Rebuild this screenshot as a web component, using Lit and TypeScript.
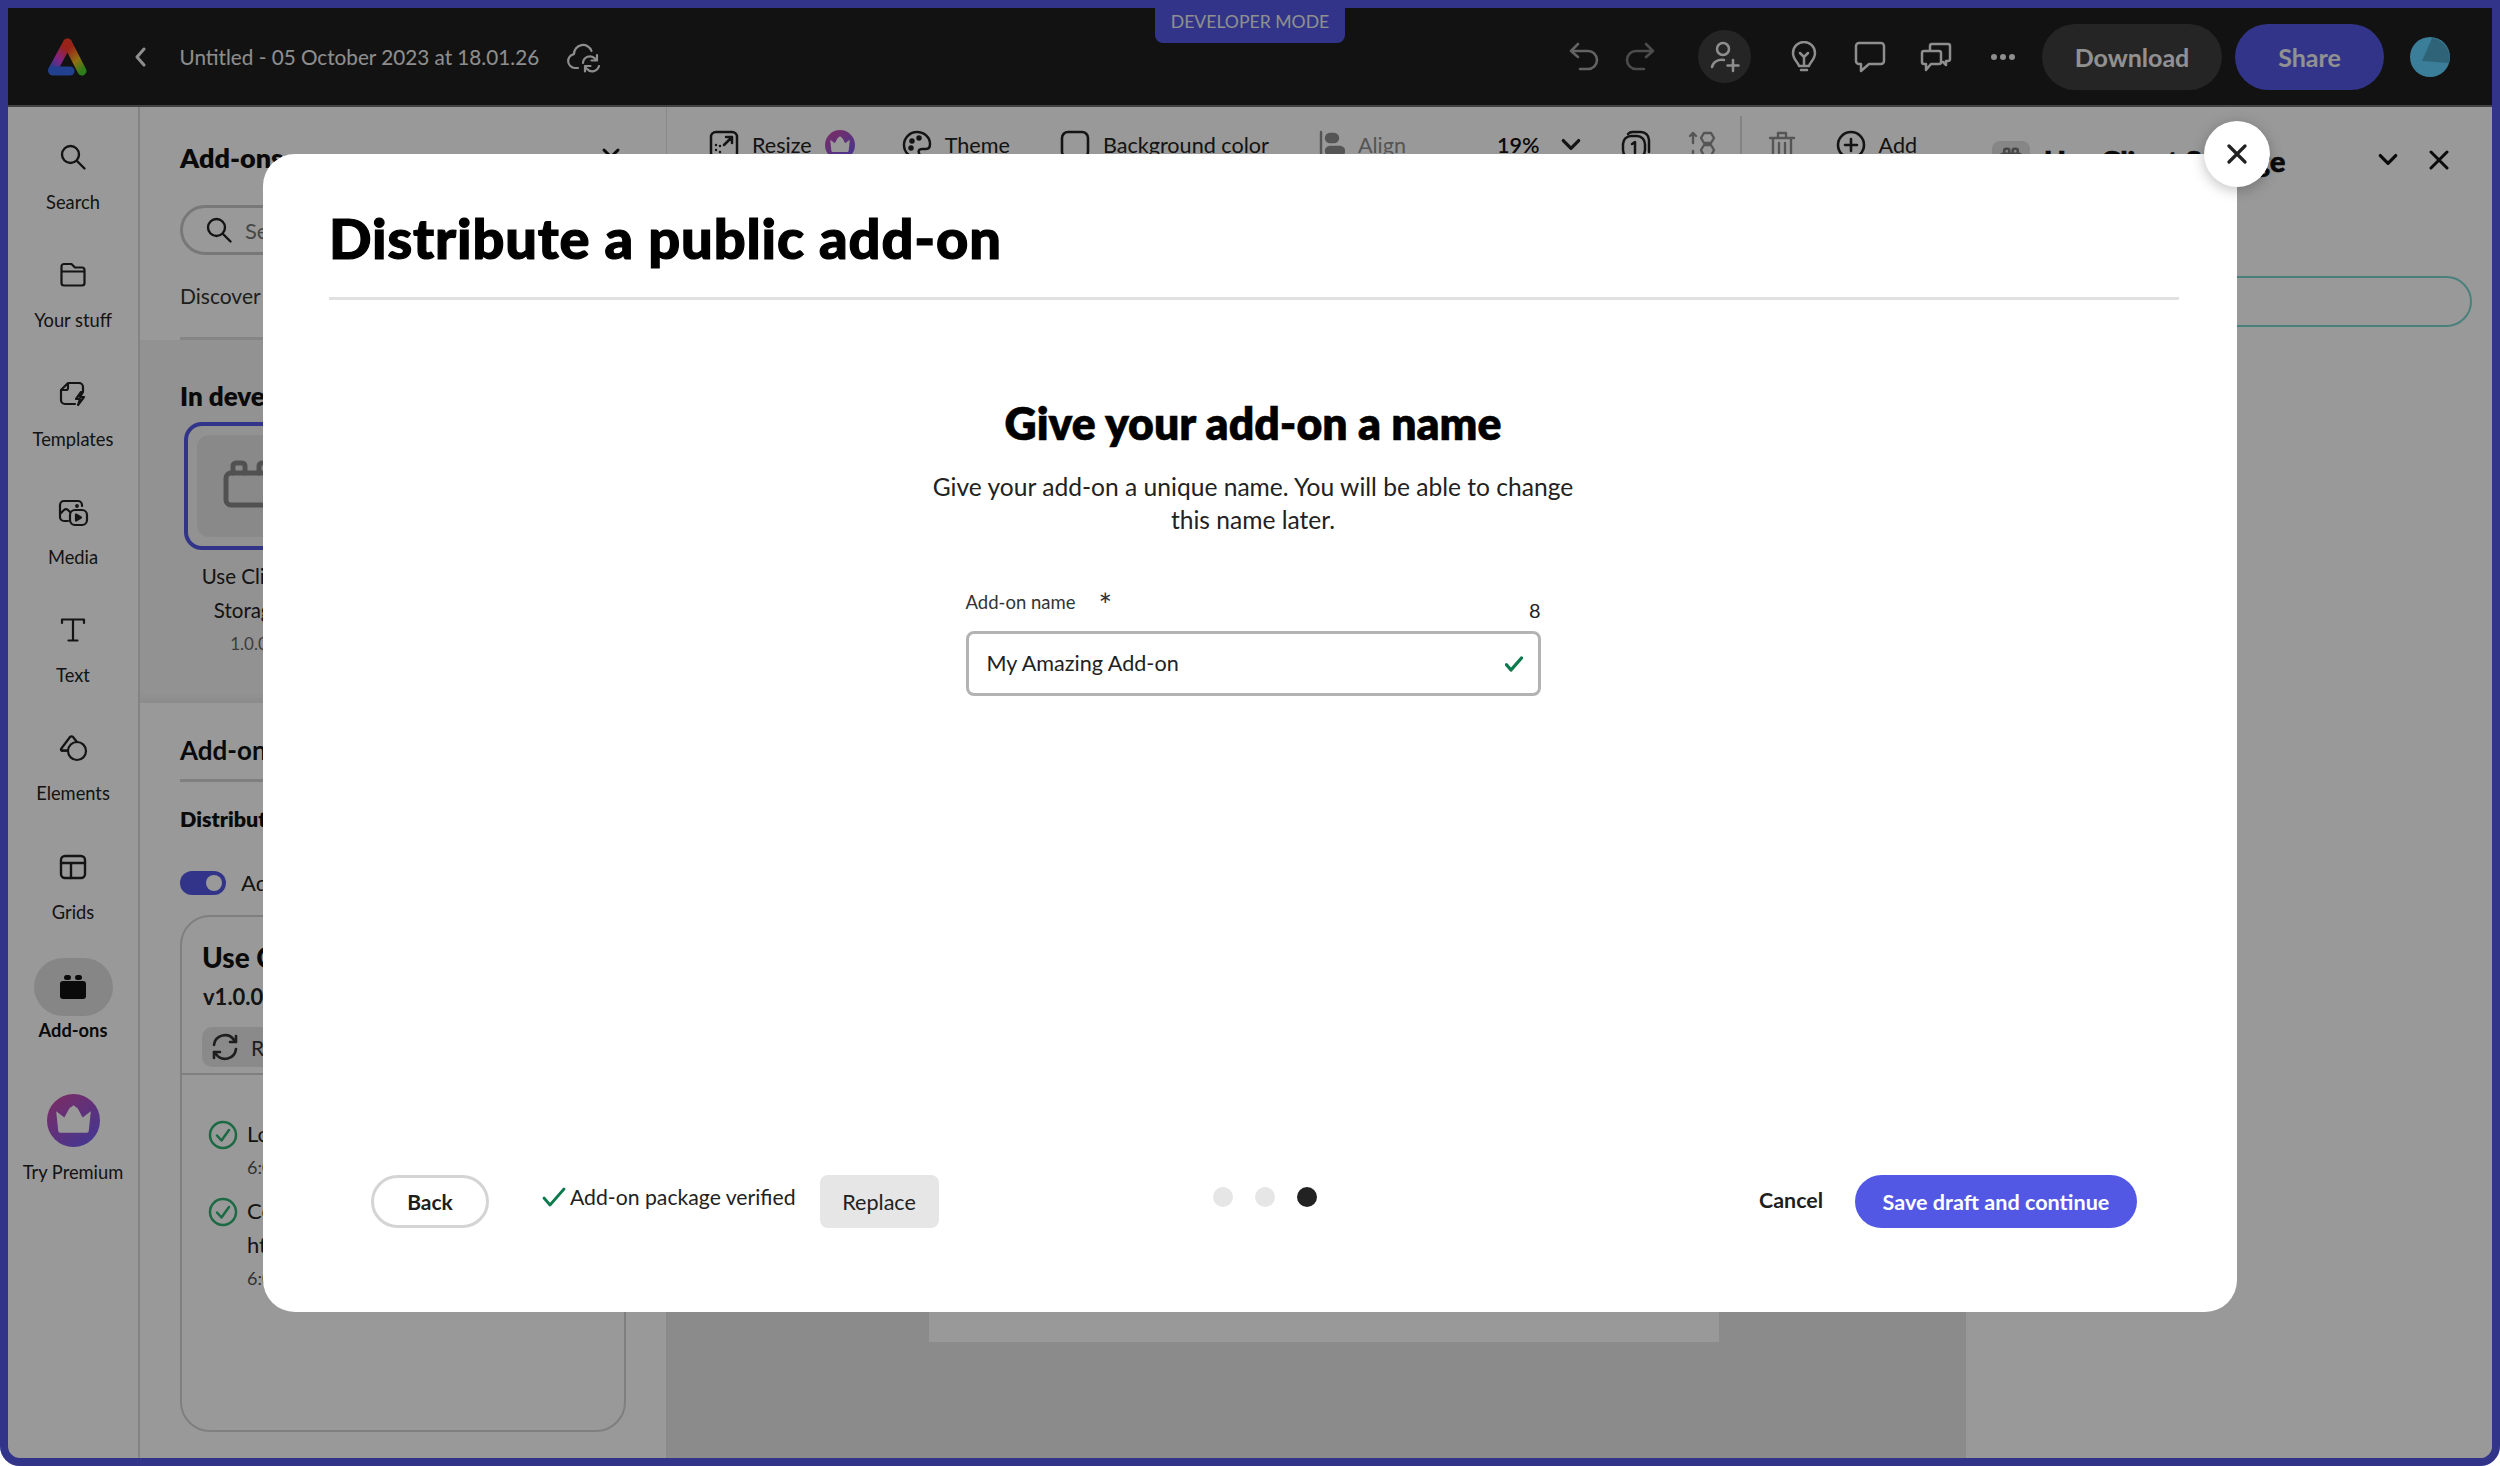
import { LitElement, html, svg, css } from "lit";
import { customElement } from "lit/decorators.js";

const ic = (w: number, h: number, vb: string, body: unknown, sw = 2.2) => html`<svg width=${w} height=${h} viewBox=${vb} fill="none" stroke="currentColor" stroke-width=${sw} stroke-linecap="round" stroke-linejoin="round">${body}</svg>`;

const searchI = (s: number) => ic(s, s, "0 0 28 28", svg`<circle cx="11.5" cy="11.5" r="8.5"></circle><path d="M18 18l7.5 7.5"></path>`, 2.4);
const folderI = ic(28, 28, "0 0 28 28", svg`<path d="M5 24.500h18a2.500 2.500 0 0 0 2.500-2.500V9a2.500 2.500 0 0 0-2.500-2.500h-7L12.500 3H5A2.500 2.500 0 0 0 2.500 5.500V22A2.500 2.500 0 0 0 5 24.500zM2.500 10.500h23"></path>`);
const templatesI = ic(30, 30, "0 0 30 30", svg`<path d="M17 25H7a4 4 0 0 1-4-4V11l7-7h11a4 4 0 0 1 4 4v4M3 11h5a2 2 0 0 0 2-2V4"></path><path d="M23 13l-5 7h4l-2 6 6-8h-4l3-5z"></path>`);
const mediaI = ic(32, 30, "0 0 32 30", svg`<path d="M11 24H7a4 4 0 0 1-4-4V8a4 4 0 0 1 4-4h14a4 4 0 0 1 4 4v1M3 17l4-4a3 3 0 0 1 4 0l2 2"></path><rect x="13" y="13" width="17" height="15" rx="5"></rect><path d="M19 17.500l5 3-5 3z" fill="currentColor"></path><circle cx="20" cy="9" r=".8" fill="currentColor"></circle>`);
const textI = ic(28, 28, "0 0 28 28", svg`<path d="M3 7V3.500h22V7M14 3.500v21M9.500 24.500h9"></path>`, 2.2);
const elementsI = ic(30, 28, "0 0 30 28", svg`<path d="M12 3L3 15a1.200 1.200 0 0 0 1 1.700h6M12 3a2 2 0 0 1 3 0l4 5"></path><path d="M10 17a9 9 0 1 0 9-9"></path><path d="M4 16.700h6a9 9 0 0 1 9-8.700"></path>`);
const gridsI = ic(28, 26, "0 0 28 26", svg`<rect x="2" y="2" width="24" height="22" rx="4"></rect><path d="M2 9h24M12 9v15"></path>`, 2.4);
const addonsI = html`<svg width="28" height="26" viewBox="0 0 28 26" fill="currentColor"><rect x="1" y="7" width="26" height="18" rx="3"></rect><rect x="5" y="1" width="7" height="5" rx="2.500"></rect><rect x="16" y="1" width="7" height="5" rx="2.500"></rect></svg>`;
const crown = (s: number, id: string) => html`<svg width=${s} height=${s} viewBox="0 0 52 52"><defs><linearGradient id=${id} x1="0.15" y1="0" x2="0.85" y2="1"><stop offset="0" stop-color="#cc4aa8"></stop><stop offset="1" stop-color="#6f5cf5"></stop></linearGradient></defs><circle cx="26" cy="26" r="26" fill="url(#${id})"></circle><path d="M9 17l8 6 5-9 4-3 4 3 5 9 8-6-2 19a2 2 0 0 1-2 2H13a2 2 0 0 1-2-2z" fill="#fff"></path></svg>`;
const check = (w: number, h: number, c: string, sw: number) => html`<svg width=${w} height=${h} viewBox="0 0 24 20" fill="none" stroke=${c} stroke-width=${sw} stroke-linecap="round" stroke-linejoin="round"><path d="M2 11l6 7L22 2"></path></svg>`;
const chevD = (w: number) => html`<svg width=${w} height=${w} viewBox="0 0 20 20" fill="none" stroke="currentColor" stroke-width="3" stroke-linecap="round" stroke-linejoin="round"><path d="M3 6l7 7 7-7"></path></svg>`;
const xI = (s: number, sw: number) => html`<svg width=${s} height=${s} viewBox="0 0 20 20" fill="none" stroke="currentColor" stroke-width=${sw} stroke-linecap="round"><path d="M2 2l16 16M18 2L2 18"></path></svg>`;
const okCircle = html`<svg width="30" height="30" viewBox="0 0 30 30" fill="none" stroke="#2fb172" stroke-width="2.500" stroke-linecap="round" stroke-linejoin="round"><circle cx="15" cy="15" r="13"></circle><path d="M9 15.500l4.500 5L21 10"></path></svg>`;

const rail = [
  { label: "Search", icon: searchI(28) },
  { label: "Your stuff", icon: folderI },
  { label: "Templates", icon: templatesI },
  { label: "Media", icon: mediaI },
  { label: "Text", icon: textI },
  { label: "Elements", icon: elementsI },
  { label: "Grids", icon: gridsI },
];

@customElement("app-root")
export class AppRoot extends LitElement {
  static styles = css`
    :host { display: block; position: relative; width: 2500px; height: 1466px; background: #fff; overflow: hidden; font-family: "Lato", "Noto Sans", sans-serif; color: #2c2c2c; }
    * { box-sizing: border-box; }
    .frame { height: 1466px; border: 8px solid #5258e4; border-radius: 0 0 20px 20px; display: flex; flex-direction: column; overflow: hidden; background: #fff; }
    .scrim { position: absolute; inset: 0; background: rgba(0, 0, 0, .4); border-radius: 0 0 20px 20px; }

    .top { height: 99px; flex: none; background: #1e1e1e; border-bottom: 2px solid #6e6e6e; display: flex; align-items: center; color: #ededed; position: relative; }
    .logo { margin-left: 40px; width: 39px; height: 38px; flex: none; }
    .back { margin-left: 47px; display: flex; color: #ededed; }
    .doc { margin-left: 33.500px; font-size: 20.700px; white-space: nowrap; margin-top: 1px; }
    .cloud { margin-left: 27px; display: flex; }
    .devtag { position: absolute; left: 1147px; top: -8px; width: 190px; height: 43px; padding-top: 0; background: #5258e4; border-radius: 0 0 8px 8px; font-size: 17.600px; color: #eee; display: flex; align-items: center; justify-content: center; }
    .actions { margin-left: auto; display: flex; align-items: center; padding-right: 42px; }
    .ib { display: flex; color: #ededed; }
    .undo { color: #a5a5a5; margin-right: 24px; }
    .redo { color: #7f7f7f; margin-right: 42px; }
    .invite { width: 53px; height: 53px; border-radius: 50%; background: #3e3e3e; align-items: center; justify-content: center; margin-right: 40px; }
    .bulb { margin-right: 37px; }
    .cmt { margin-right: 34px; }
    .cmts { margin-right: 39px; }
    .dots3 { margin-right: 27px; }
    .pill { height: 66px; border-radius: 33px; font-size: 25px; font-weight: 700; display: flex; align-items: center; justify-content: center; color: #f2f2f2; }
    .dl { width: 180px; background: #3e3e3e; margin-right: 13px; }
    .sh { width: 149px; background: #5258e4; margin-right: 26px; }

    .body { flex: 1; display: flex; min-height: 0; }
    .rail { width: 132px; flex: none; border-right: 2px solid #dcdcdc; padding-top: 20px; display: flex; flex-direction: column; align-items: center; color: #222; }
    .ri { height: 118.300px; width: 100%; display: flex; flex-direction: column; align-items: center; }
    .rbox { height: 60px; display: flex; align-items: center; justify-content: center; color: #222; }
    .rl { height: 30px; line-height: 30px; font-size: 18.300px; white-space: nowrap; }
    .sel { width: 79px; height: 58px; margin-top: 3px; border-radius: 29px; background: #e0e0e0; display: flex; align-items: center; justify-content: center; color: #111; }
    .ri.on .rl { font-weight: 700; color: #111; }
    .prem { margin-top: 8px; height: 140px; }
    .prem .rbox { height: 78px; }
    .prem .rl { margin-top: -2px; }

    .panel { width: 527px; flex: none; display: flex; flex-direction: column; color: #111; border-right: 1px solid #e4e4e4; }
    .ptop { padding: 32px 40px 0; height: 233px; position: relative; }
    .ptitle { font-size: 27px; font-weight: 800; line-height: 38px; display: flex; justify-content: space-between; align-items: center; padding-right: 5px; }
    .ptitle svg { margin-top: -8px; }
    .psearch { margin-top: 28px; height: 50px; width: 300px; border: 3px solid #c9c9c9; border-radius: 25px; display: flex; align-items: center; gap: 12px; padding-left: 22px; color: #222; font-size: 22px; }
    .psearch span { color: #777; }
    .ptabs { margin-top: 26px; font-size: 21px; color: #333; line-height: 30px; padding-bottom: 12px; }
    .ptop .line { position: absolute; left: 40px; right: 40px; bottom: 0; height: 3px; background: #dedede; }
    .indev { height: 363px; background: #f4f4f4; padding: 40px 40px 0; box-shadow: inset 0 -12px 12px -10px #e2e2e2; }
    .h3 { font-size: 26px; font-weight: 800; line-height: 32px; color: #111; }
    .tile { margin: 10px 0 0 4px; width: 130px; height: 128px; padding: 9px; border: 4px solid #5258e4; border-radius: 18px; }
    .tile div { width: 100%; height: 100%; border-radius: 12px; background: #e5e5e5; padding: 24px 0 0 26px; color: #888; overflow: hidden; }
    .tname { margin: 9px 0 0 3px; font-size: 20.500px; line-height: 34px; text-align: center; width: 130px; color: #222; }
    .tver { margin: 2px 0 0 4px; font-size: 17px; line-height: 30px; color: #666; text-align: center; width: 130px; }
    .psec { padding: 30px 40px 0; flex: 1; min-height: 0; display: flex; flex-direction: column; }
    .psec .head { font-size: 26px; font-weight: 700; line-height: 34px; padding-bottom: 12px; border-bottom: 3px solid #d4d4d4; }
    .psec .dist { margin-top: 22px; font-size: 21.500px; font-weight: 800; line-height: 30px; }
    .tgl { margin-top: 35px; display: flex; align-items: center; gap: 15px; font-size: 22px; color: #222; }
    .track { width: 46px; height: 24px; border-radius: 12px; background: #5258e4; position: relative; }
    .track i { position: absolute; right: 4px; top: 4px; width: 16px; height: 16px; border-radius: 50%; background: #fff; }
    .card { margin-top: 19px; height: 517px; border: 2px solid #d4d4d4; border-radius: 30px; display: flex; flex-direction: column; }
    .cardtop { padding: 22px 20px 0; height: 158px; border-bottom: 2px solid #d4d4d4; }
    .cname { font-size: 28px; font-weight: 900; line-height: 36px; color: #111; }
    .cver { margin: 7px 0 0 1px; font-size: 22px; font-weight: 700; line-height: 30px; color: #222; }
    .rebtn { margin-top: 15px; height: 40px; width: 200px; background: #e6e6e6; border-radius: 10px; display: flex; align-items: center; gap: 12px; padding-left: 9px; font-size: 21px; color: #333; }
    .log { display: flex; gap: 9px; padding: 42px 0 0 26px; }
    .log + .log { padding-top: 11px; }
    .log svg { flex: none; margin-top: 3px; }
    .log p { margin: 0; font-size: 22px; line-height: 34px; color: #222; }
    .log small { display: block; font-size: 18px; color: #555; line-height: 32px; }

    .canvas { width: 1299px; flex: none; background: #e8e8e8; display: flex; flex-direction: column; align-items: center; }
    .tools { align-self: stretch; height: 76px; flex: none; background: #fff; padding-left: 42px; display: flex; align-items: center; font-size: 21.600px; color: #222; white-space: nowrap; }
    .tools span.g { display: flex; align-items: center; gap: 13px; }
    .mute { color: #8e8e8e; }
    .t1 { margin-left: 47px; }
    .t2 { margin-left: 50px; }
    .t3 { margin-left: 50px; }
    .t4 { margin-left: 91px; font-weight: 600; color: #111; }
    .t5 { margin-left: 20px; display: flex; }
    .t6 { margin-left: 39px; display: flex; }
    .t7 { margin-left: 37px; display: flex; color: #8e8e8e; }
    .vd { margin-left: 24px; width: 2px; height: 50px; background: #ddd; margin-top: -8px; }
    .t8 { margin-left: 26px; display: flex; color: #8e8e8e; }
    .t9 { margin-left: 40px; }
    .page { margin-top: auto; margin-bottom: 116px; margin-left: 14px; width: 790px; height: 400px; background: #fff; }

    .right { flex: 1; background: #fff; padding: 34px 20px 0 26px; color: #111; }
    .rhead { display: flex; align-items: center; height: 38px; }
    .rthumb { width: 38px; height: 38px; border-radius: 8px; background: #e0e0e0; margin-right: 14px; padding: 6px 0 0 7px; color: #777; flex: none; }
    .rname { font-size: 29.300px; font-weight: 900; flex: 1; white-space: nowrap; -webkit-text-stroke: .6px #111; }
    .rchev { display: flex; margin-right: 30px; }
    .rx { display: flex; margin-right: 23px; }
    .rinput { margin-top: 97px; height: 51px; border: 2px solid #7cd6cf; border-radius: 26px; }

    .modal { position: absolute; left: 263px; top: 154px; width: 1974px; height: 1158px; background: #fff; border-radius: 32px 0 32px 32px; display: flex; flex-direction: column; color: #000; }
    .close { position: absolute; right: -33px; top: -33px; width: 66px; height: 66px; border-radius: 50%; background: #fff; display: flex; align-items: center; justify-content: center; color: #222; box-shadow: 0 3px 14px rgba(0,0,0,.25); }
    .mhead { margin: 0 58px 0 66px; padding: 54px 0 29px; border-bottom: 3px solid #e1e1e1; }
    h1 { margin: 0; font-size: 56px; line-height: 60px; font-weight: 900; color: #000; letter-spacing: .85px; -webkit-text-stroke: 1.200px #000; }
    .mid { padding-left: 6px; }
    h2 { margin: 99px 0 0; text-align: center; font-size: 44.500px; line-height: 48px; font-weight: 800; color: #000; -webkit-text-stroke: .5px #000; }
    .desc { margin: 24px auto 0; width: 660px; text-align: center; font-size: 24.600px; line-height: 32.500px; color: #222; }
    .form { margin: 52px auto 0; width: 575px; }
    .lrow { display: flex; justify-content: space-between; align-items: flex-start; height: 43px; }
    .lab { font-size: 18.500px; line-height: 28px; color: #333; display: flex; }
    .lab b { font-weight: 400; margin-left: 23px; font-size: 32px; line-height: 34px; color: #333; }
    .cnt { font-size: 20px; line-height: 28px; margin-top: 8px; color: #222; }
    .input { height: 65px; border: 3px solid #b3b3b3; border-radius: 8px; display: flex; align-items: center; justify-content: space-between; padding: 0 15px 0 18px; font-size: 21.600px; color: #222; }
    .input span { margin-top: -2px; }
    .input svg { flex: none; }
    .foot { margin-top: auto; padding: 0 100px 84px 108px; display: flex; align-items: center; }
    .fl, .fr { flex: 1; display: flex; align-items: center; }
    .fr { justify-content: flex-end; }
    .back-btn { width: 118px; height: 53px; border: 3px solid #d4d4d4; border-radius: 27px; font-size: 21px; font-weight: 700; color: #1e1e1e; display: flex; align-items: center; justify-content: center; }
    .ver { margin-left: 53px; display: flex; align-items: center; gap: 4px; font-size: 21.200px; color: #222; margin-bottom: 10px; white-space: nowrap; }
    .rep { margin-left: 24px; width: 119px; height: 53px; border-radius: 8px; background: #e6e6e6; font-size: 21.600px; color: #222; display: flex; align-items: center; justify-content: center; }
    .dots { display: flex; gap: 22px; margin: 0 0 10px 22px; }
    .dots i { width: 20px; height: 20px; border-radius: 50%; background: #e6e6e6; }
    .dots i.cur { background: #222; }
    .cancel { font-size: 21.400px; font-weight: 700; color: #1e1e1e; margin-right: 32px; margin-bottom: 4px; }
    .save { width: 282px; height: 53px; border-radius: 27px; background: #5258e4; color: #fff; font-size: 21.600px; font-weight: 700; display: flex; align-items: center; justify-content: center; white-space: nowrap; }
  `;

  render() {
    return html`
      <div class="frame">
        <header class="top">
          <svg class="logo" viewBox="0 0 39 38">
            <defs>
              <linearGradient id="la" x1="0.5" y1="0" x2="0" y2="1"><stop offset="0" stop-color="#ff3a2a"></stop><stop offset=".5" stop-color="#d83cd8"></stop><stop offset="1" stop-color="#3a6cf0"></stop></linearGradient>
              <linearGradient id="lb" x1="0.5" y1="0" x2="1" y2="1"><stop offset="0" stop-color="#ff3a2a"></stop><stop offset=".55" stop-color="#f2b820"></stop><stop offset="1" stop-color="#4cd02c"></stop></linearGradient>
            </defs>
            <path d="M19.500 5L4.500 32.500" stroke="url(#la)" stroke-width="9" stroke-linecap="round" fill="none"></path>
            <path d="M19.500 5L34 33" stroke="url(#lb)" stroke-width="9" stroke-linecap="round" fill="none"></path>
            <path d="M5 33h17" stroke="#3a6cf0" stroke-width="9" stroke-linecap="round" fill="none"></path>
            <path d="M19.500 18l-4 7.500h7.500z" fill="#1e1e1e"></path>
          </svg>
          <span class="back"><svg width="12" height="20" viewBox="0 0 12 20" fill="none" stroke="currentColor" stroke-width="3" stroke-linecap="round" stroke-linejoin="round"><path d="M10 2L3 10l7 8"></path></svg></span>
          <span class="doc">Untitled - 05 October 2023 at 18.01.26</span>
          <span class="cloud">${ic(38, 32, "0 0 38 32", svg`<path d="M12 27H9a7 7 0 0 1-1-13.900 9 9 0 0 1 17.500-3.100"></path><path d="M17 22a7 7 0 0 1 12-4.500l2 2M31 14v5.500h-5.500M33 25a7 7 0 0 1-12 3l-2-2M19 30.500V25h5.500"></path>`)}</span>
          <div class="devtag">DEVELOPER MODE</div>
          <div class="actions">
            <span class="ib undo">${ic(32, 30, "0 0 32 30", svg`<path d="M10 2L3 9l7 6M3 9h17a8 8 0 0 1 0 18h-8"></path>`, 2.6)}</span>
            <span class="ib redo">${ic(32, 30, "0 0 32 30", svg`<path d="M22 2l7 7-7 6M29 9H12a8 8 0 0 0 0 18h8"></path>`, 2.6)}</span>
            <span class="ib invite">${ic(30, 32, "0 0 30 32", svg`<circle cx="13" cy="8" r="6"></circle><path d="M2 26c1-5 6-8 12-7M23 19v11M17.500 24.500h11"></path>`, 2.5)}</span>
            <span class="ib bulb">${ic(26, 32, "0 0 26 32", svg`<path d="M8 25c0-3-6-6-6-13a11 11 0 0 1 22 0c0 7-6 10-6 13zM13 25v-9M9 12l4 4 4-4M10 29h6"></path>`, 2.5)}</span>
            <span class="ib cmt">${ic(32, 32, "0 0 32 32", svg`<path d="M5 2h22a3 3 0 0 1 3 3v15a3 3 0 0 1-3 3H15l-8 7v-7H5a3 3 0 0 1-3-3V5a3 3 0 0 1 3-3z"></path>`, 2.5)}</span>
            <span class="ib cmts">${ic(32, 30, "0 0 32 30", svg`<path d="M10 8V4a2 2 0 0 1 2-2h16a2 2 0 0 1 2 2v13a2 2 0 0 1-2 2h-2v4l-3-3"></path><path d="M4 9h15a2 2 0 0 1 2 2v9a2 2 0 0 1-2 2h-8l-5 6v-6H4a2 2 0 0 1-2-2v-9a2 2 0 0 1 2-2z"></path>`, 2.5)}</span>
            <span class="ib dots3"><svg width="24" height="8" viewBox="0 0 24 8" fill="currentColor"><circle cx="3" cy="4" r="3"></circle><circle cx="12" cy="4" r="3"></circle><circle cx="21" cy="4" r="3"></circle></svg></span>
            <span class="pill dl">Download</span>
            <span class="pill sh">Share</span>
            <svg width="40" height="40" viewBox="0 0 40 40"><circle cx="20" cy="20" r="20" fill="#61d3ff"></circle><path d="M12 24L22 1a20 20 0 0 1 17 25z" fill="#4fa7c8"></path></svg>
          </div>
        </header>
        <div class="body">
          <nav class="rail">
            ${rail.map((r) => html`<div class="ri"><div class="rbox">${r.icon}</div><div class="rl">${r.label}</div></div>`)}
            <div class="ri on"><div class="rbox"><div class="sel">${addonsI}</div></div><div class="rl">Add-ons</div></div>
            <div class="ri prem"><div class="rbox">${crown(53, "c1")}</div><div class="rl">Try Premium</div></div>
          </nav>
          <aside class="panel">
            <div class="ptop">
              <div class="ptitle"><span>Add-ons</span>${chevD(20)}</div>
              <div class="psearch">${searchI(28)}<span>Search</span></div>
              <div class="ptabs">Discover</div>
              <div class="line"></div>
            </div>
            <div class="indev">
              <div class="h3">In development</div>
              <div class="tile"><div>${ic(60, 50, "0 0 60 50", svg`<rect x="3" y="14" width="54" height="32" rx="5"></rect><path d="M10 14V7a3 3 0 0 1 3-3h6a3 3 0 0 1 3 3v7M36 14V7a3 3 0 0 1 3-3h6a3 3 0 0 1 3 3v7"></path>`, 5)}</div></div>
              <div class="tname">Use Client Storage</div>
              <div class="tver">1.0.0</div>
            </div>
            <div class="psec">
              <div class="head">Add-on details</div>
              <div class="dist">Distribution</div>
              <div class="tgl"><span class="track"><i></i></span>Add-on testing</div>
              <div class="card">
                <div class="cardtop">
                  <div class="cname">Use Client Storage</div>
                  <div class="cver">v1.0.0</div>
                  <div class="rebtn">${ic(28, 28, "0 0 28 28", svg`<path d="M3 12a11 11 0 0 1 20-5l2 2M25 3v6h-6M25 16a11 11 0 0 1-20 5l-2-2M3 25v-6h6"></path>`, 2.6)}Refresh</div>
                </div>
                <div class="log">${okCircle}<p>Local files loaded<small>6:01 PM</small></p></div>
                <div class="log">${okCircle}<p>Connected to<br />https://localhost<small>6:01 PM</small></p></div>
              </div>
            </div>
          </aside>
          <main class="canvas">
            <div class="tools">
              <span class="g">${ic(30, 30, "0 0 30 30", svg`<rect x="2" y="2" width="26" height="26" rx="5"></rect><path d="M15 15l8-8M17 7h6v6"></path><path d="M7 20v.1M11 16v.1M11 22v.1M7 15v.1"></path>`, 2.5)}<span>Resize</span>${crown(30, "c2")}</span>
              <span class="g t1">${ic(30, 30, "0 0 30 30", svg`<path d="M15 2a13 13 0 1 0 0 26c3 0 3-3 2-5s0-4 3-4h4c3 0 4-2 4-5C28 7 22 2 15 2z"></path><circle cx="10" cy="11" r="1.500" fill="currentColor"></circle><circle cx="17" cy="8" r="1.500" fill="currentColor"></circle><circle cx="9" cy="18" r="1.500" fill="currentColor"></circle>`, 2.5)}<span>Theme</span></span>
              <span class="g t2">${ic(30, 30, "0 0 30 30", svg`<rect x="2" y="2" width="26" height="26" rx="6"></rect>`, 2.6)}<span>Background color</span></span>
              <span class="g t3 mute">${ic(26, 30, "0 0 26 30", svg`<path d="M2 2v26"></path><rect x="7" y="4" width="12" height="8" rx="4" fill="currentColor"></rect><rect x="7" y="17" width="18" height="8" rx="4" fill="currentColor"></rect>`, 2.4)}<span>Align</span></span>
              <span class="t4">19%</span>
              <span class="t5">${chevD(22)}</span>
              <span class="t6">${ic(30, 30, "0 0 30 30", svg`<path d="M7 4a6 6 0 0 1 5-2h8a8 8 0 0 1 8 8v12"></path><rect x="2" y="6" width="22" height="22" rx="8"></rect><path d="M11 14l3-2v11"></path>`, 2.5)}</span>
              <span class="t7">${ic(28, 30, "0 0 28 30", svg`<path d="M5 13V3M2 6l3-3 3 3M5 21v7M2 28h6"></path><path d="M16 3h7l3 5-3 5h-7l-3-5zM16 15h7l3 5-3 6h-7l-3-6z"></path>`, 2.4)}</span>
              <span class="vd"></span>
              <span class="t8">${ic(28, 30, "0 0 28 30", svg`<path d="M2 8h24M10 8V3h8v5M5 8v20h18V8M11 13v10M17 13v10"></path>`, 2.4)}</span>
              <span class="g t9">${ic(30, 30, "0 0 30 30", svg`<circle cx="15" cy="15" r="13"></circle><path d="M15 9v12M9 15h12"></path>`, 2.6)}<span>Add</span></span>
            </div>
            <div class="page"></div>
          </main>
          <aside class="right">
            <div class="rhead">
              <span class="rthumb">${ic(24, 22, "0 0 28 26", svg`<rect x="2" y="8" width="24" height="16" rx="3"></rect><path d="M6 8V4a2 2 0 0 1 2-2h2a2 2 0 0 1 2 2v4M16 8V4a2 2 0 0 1 2-2h2a2 2 0 0 1 2 2v4"></path>`, 3)}</span>
              <span class="rname">Use Client Storage</span>
              <span class="rchev">${chevD(22)}</span>
              <span class="rx">${xI(20, 3)}</span>
            </div>
            <div class="rinput"></div>
          </aside>
        </div>
      </div>
      <div class="scrim"></div>
      <section class="modal">
        <div class="close">${xI(20, 3.200)}</div>
        <div class="mhead"><h1>Distribute a public add-on</h1></div>
        <div class="mid">
          <h2>Give your add-on a name</h2>
          <p class="desc">Give your add-on a unique name. You will be able to change this name later.</p>
          <div class="form">
            <div class="lrow"><span class="lab">Add-on name<b>*</b></span><span class="cnt">8</span></div>
            <div class="input"><span>My Amazing Add-on</span>${check(18, 16, "#0d7a4e", 4.5)}</div>
          </div>
        </div>
        <div class="foot">
          <div class="fl">
            <div class="back-btn">Back</div>
            <div class="ver">${check(24, 20, "#0d7a4e", 2.800)}<span>Add-on package verified</span></div>
            <div class="rep">Replace</div>
          </div>
          <div class="dots"><i></i><i></i><i class="cur"></i></div>
          <div class="fr">
            <span class="cancel">Cancel</span>
            <div class="save">Save draft and continue</div>
          </div>
        </div>
      </section>
    `;
  }
}
